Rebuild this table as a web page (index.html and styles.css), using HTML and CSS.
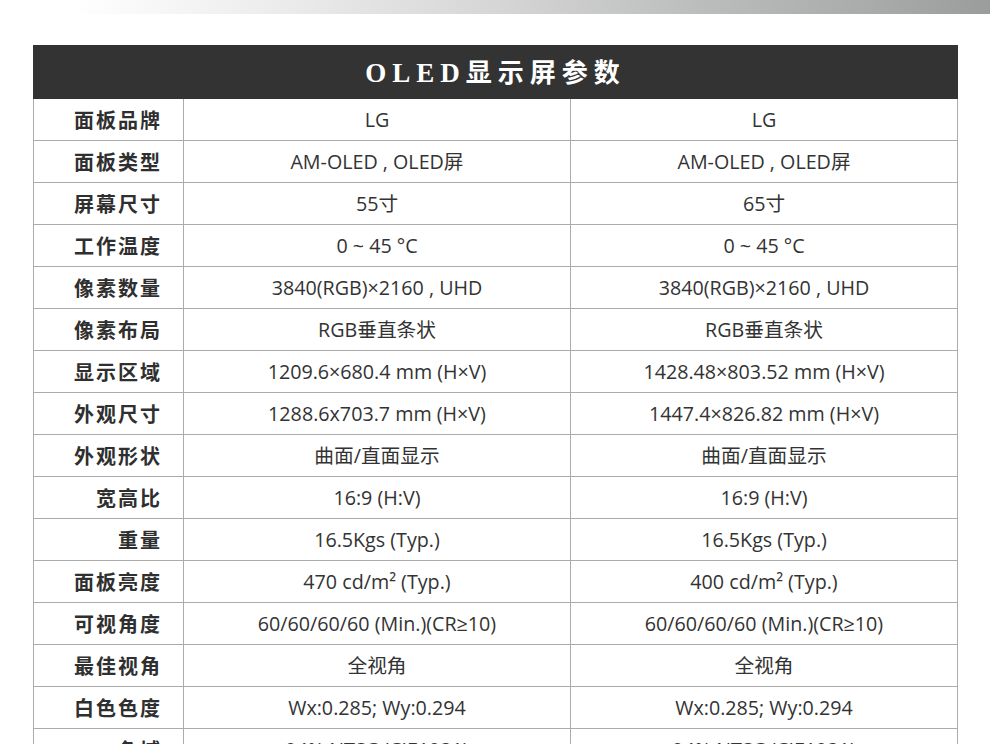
FILE: index.html
```html
<!DOCTYPE html>
<html lang="zh-CN">
<head>
<meta charset="utf-8">
<title>OLED显示屏参数</title>
<link rel="stylesheet" href="styles.css">
</head>
<body>
<div class="topbar"></div>
<main class="wrap">
  <table class="spec">
    <colgroup>
      <col class="c-label">
      <col class="c-val">
      <col class="c-val">
    </colgroup>
    <thead>
      <tr><th colspan="3" class="title"><span class="latin">OLED</span>显示屏参数</th></tr>
    </thead>
    <tbody>
      <tr><td class="label">面板品牌</td><td>LG</td><td>LG</td></tr>
      <tr><td class="label">面板类型</td><td>AM-OLED , OLED屏</td><td>AM-OLED , OLED屏</td></tr>
      <tr><td class="label">屏幕尺寸</td><td>55寸</td><td>65寸</td></tr>
      <tr><td class="label">工作温度</td><td>0 ~ 45 °C</td><td>0 ~ 45 °C</td></tr>
      <tr><td class="label">像素数量</td><td>3840(RGB)×2160 , UHD</td><td>3840(RGB)×2160 , UHD</td></tr>
      <tr><td class="label">像素布局</td><td>RGB垂直条状</td><td>RGB垂直条状</td></tr>
      <tr><td class="label">显示区域</td><td>1209.6×680.4 mm (H×V)</td><td>1428.48×803.52 mm (H×V)</td></tr>
      <tr><td class="label">外观尺寸</td><td>1288.6x703.7 mm (H×V)</td><td>1447.4×826.82 mm (H×V)</td></tr>
      <tr><td class="label">外观形状</td><td>曲面/直面显示</td><td>曲面/直面显示</td></tr>
      <tr><td class="label">宽高比</td><td>16:9 (H:V)</td><td>16:9 (H:V)</td></tr>
      <tr><td class="label">重量</td><td>16.5Kgs (Typ.)</td><td>16.5Kgs (Typ.)</td></tr>
      <tr><td class="label">面板亮度</td><td>470 cd/m² (Typ.)</td><td>400 cd/m² (Typ.)</td></tr>
      <tr><td class="label">可视角度</td><td>60/60/60/60 (Min.)(CR≥10)</td><td>60/60/60/60 (Min.)(CR≥10)</td></tr>
      <tr><td class="label">最佳视角</td><td>全视角</td><td>全视角</td></tr>
      <tr><td class="label">白色色度</td><td>Wx:0.285; Wy:0.294</td><td>Wx:0.285; Wy:0.294</td></tr>
      <tr><td class="label">色域</td><td>94% NTSC (CIE1931)</td><td>94% NTSC (CIE1931)</td></tr>
    </tbody>
  </table>
</main>
</body>
</html>
```
FILE: styles.css
```css
html, body {
  margin: 0;
  padding: 0;
  background: #fff;
}
body {
  font-family: "Open Sans", "Noto Sans CJK SC", sans-serif;
  color: #333;
  overflow: hidden;
}
.topbar {
  height: 14px;
  background: linear-gradient(to right, #ffffff 0%, #ffffff 7%, #ececec 28%, #d6d6d6 50%, #bcbdbd 70%, #a9aaaa 88%, #9b9c9c 100%);
}
.wrap {
  padding: 31px 33px 0 33px;
}
.spec {
  border-collapse: collapse;
  width: 924px;
  table-layout: fixed;
}
.c-label { width: 150px; }
.c-val { width: 387px; }
.title {
  height: 52px;
  padding: 0;
  background: #333333;
  color: #fff;
  font-family: "Noto Sans CJK SC", sans-serif;
  font-weight: 700;
  font-size: 26px;
  line-height: 30px;
  letter-spacing: 6px;
  text-align: center;
  vertical-align: middle;
  border: 1px solid #333;
}
.title .latin {
  font-family: "Liberation Serif", "Noto Sans CJK SC", serif;
  font-weight: 700;
  font-size: 27px;
  letter-spacing: 6px;
}
.spec td {
  height: 41px;
  padding: 0;
  border: 1px solid #ababab;
  text-align: center;
  vertical-align: middle;
  font-size: 19.7px;
  line-height: 26px;
  color: #333;
  white-space: nowrap;
}
.spec td.label {
  text-align: right;
  padding-right: 21px;
  font-family: "Noto Sans CJK SC", sans-serif;
  font-weight: 700;
  font-size: 20px;
  letter-spacing: 2px;
  color: #2f2f2f;
}
```
